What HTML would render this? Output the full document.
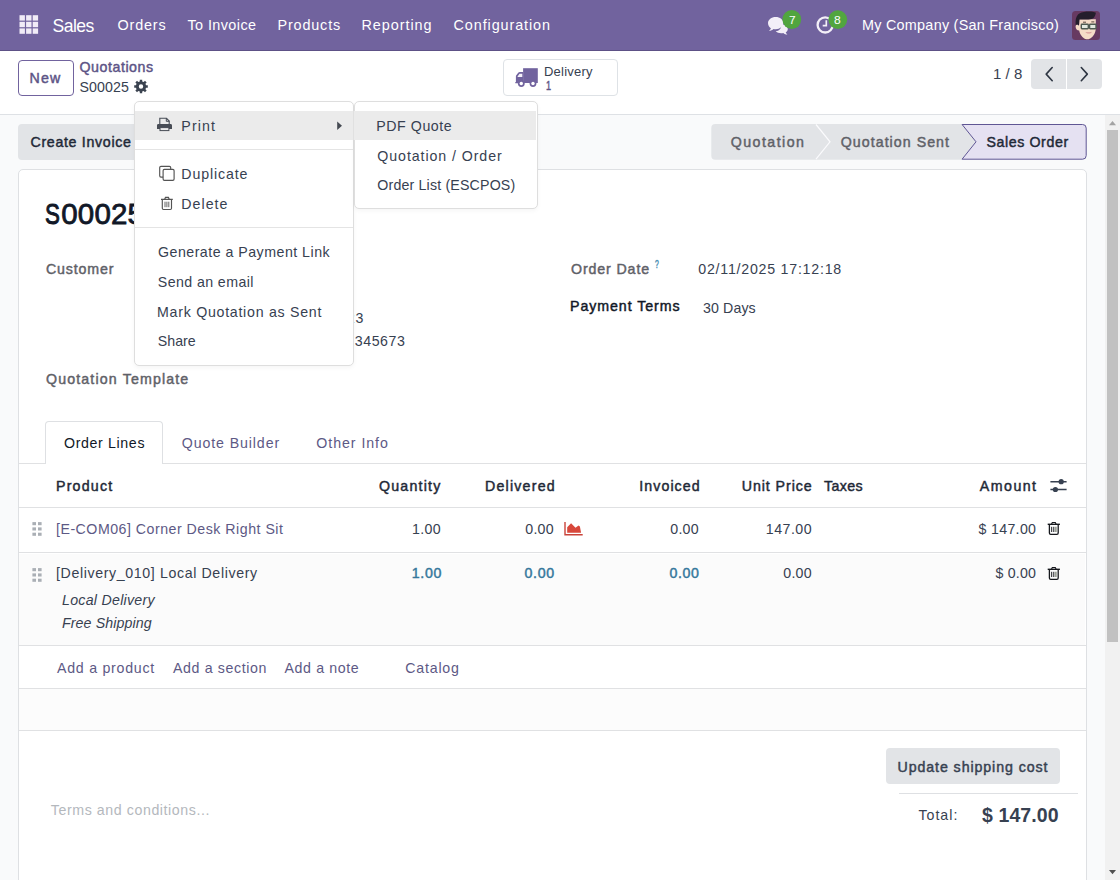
<!DOCTYPE html>
<html lang="en">
<head>
<meta charset="utf-8">
<title>Odoo - S00025</title>
<style>
*{box-sizing:border-box;margin:0;padding:0}
html,body{width:1120px;height:880px;overflow:hidden}
body{font-family:"Liberation Sans",sans-serif;font-size:15px;color:#374151;background:#f9fafb;position:relative}
.a,.t,svg{position:absolute}
.t{white-space:nowrap}
svg{overflow:visible}
h1{font:inherit}
.hl{position:absolute;height:1px;background:#e0e1e3}
.dd{position:absolute;background:#fff;border:1px solid #dedede;border-radius:5px;box-shadow:0 2px 4px rgba(0,0,0,.04)}
</style>
</head>
<body>
<nav class="o_main_navbar">
<div class="a" style="left:0px;top:0px;width:1120px;height:51px;background:#71639e;border-bottom:1px solid #5d5186"></div>
<svg width="1120" height="51" style="left:0;top:0"><g fill="#f1ecf7"><rect x="19.5" y="15.2" width="5.4" height="5.4"/><rect x="26.1" y="15.2" width="5.4" height="5.4"/><rect x="32.7" y="15.2" width="5.4" height="5.4"/><rect x="19.5" y="21.8" width="5.4" height="5.4"/><rect x="26.1" y="21.8" width="5.4" height="5.4"/><rect x="32.7" y="21.8" width="5.4" height="5.4"/><rect x="19.5" y="28.4" width="5.4" height="5.4"/><rect x="26.1" y="28.4" width="5.4" height="5.4"/><rect x="32.7" y="28.4" width="5.4" height="5.4"/></g><g fill="#f3eff8"><path d="M781.5 24.2c3.6 0.2 6.3 2.3 6.3 4.9 0 1.4-0.8 2.600-2.100 3.500 0.300 0.800 0.900 1.500 1.700 2.000-1.500 0-3.000-0.500-4.100-1.500-0.700 0.100-1.400 0.200-2.100 0.200-2.300 0-4.300-0.800-5.500-2.000 3.400-0.400 6.000-2.900 5.800-7.100z" /><path d="M775.7 17c4.300 0 7.700 2.700 7.700 6.100s-3.400 6.100-7.700 6.100c-0.700 0-1.400-0.100-2.100-0.200-1.200 1.100-2.800 1.800-4.600 1.900 0.900-0.700 1.600-1.600 1.900-2.700-1.800-1.100-2.900-2.900-2.900-5.100 0-3.400 3.400-6.100 7.700-6.100z"/></g><circle cx="791.8" cy="19.5" r="9.4" fill="#51a53f"/><circle cx="825.2" cy="24.9" r="7.6" fill="none" stroke="#f3eff8" stroke-width="2.3"/><path d="M826.3 20.3v5.400h-3.600" fill="none" stroke="#f3eff8" stroke-width="1.7"/><circle cx="837.8" cy="19.6" r="9.4" fill="#51a53f"/><g><rect x="1072" y="11" width="28" height="29" rx="3.5" fill="#673a62"/><path d="M1079.2 19.200h16.600v8.500c0 2.000-0.300 4.000-1.300 6.000-1.400 2.800-4.000 5.600-7.000 5.600s-5.700-2.600-7.200-5.400c-0.600-1.100-0.900-2.200-1.100-3.300-2.000 0.100-3.500-1.700-3.600-3.900-0.100-2.000 1.600-3.100 3.600-2.300z" fill="#f6dcc8"/><path d="M1075.800 25.200c-0.600-5.200 0.200-9.800 3.600-11.800 4.500-2.600 13.400-2.400 16.200-0.900 0.800 0.500-0.800 5.000-2.800 6.000-3.600 1.800-9.600 0.500-13.300 1.000-0.200 2.000-0.400 4.000-0.600 6.300-1.200-1.400-2.500-1.600-3.100-0.600z" fill="#241e2c"/><path d="M1083.000 22.200h3.000M1091.300 21.900h3.000" stroke="#4a3a33" stroke-width="0.900" fill="none"/><rect x="1081.300" y="24.300" width="7.000" height="4.400" rx="0.700" fill="#e4e9e0" stroke="#4f5a52" stroke-width="1.400"/><rect x="1089.600" y="24.300" width="6.400" height="4.400" rx="0.700" fill="#e4e9e0" stroke="#4f5a52" stroke-width="1.400"/><path d="M1085.400 32.000c1.700 2.200 5.300 2.200 6.600-0.300-2.000 0.600-4.400 0.700-6.600 0.300z" fill="#d99a9a"/></g></svg>
<span class="t" id="n_sales" style="left:52.50px;top:14px;line-height:24px;height:24px;font-size:17.6px;color:#fff;letter-spacing:-0.553px;">Sales</span>
<span class="t" id="n_orders" style="left:117.50px;top:15px;line-height:20px;height:20px;font-size:14.4px;color:#fff;letter-spacing:0.843px;">Orders</span>
<span class="t" id="n_toinv" style="left:187.50px;top:15px;line-height:20px;height:20px;font-size:14.4px;color:#fff;letter-spacing:0.412px;">To Invoice</span>
<span class="t" id="n_prod" style="left:277.50px;top:15px;line-height:20px;height:20px;font-size:14.4px;color:#fff;letter-spacing:0.844px;">Products</span>
<span class="t" id="n_rep" style="left:361.50px;top:15px;line-height:20px;height:20px;font-size:14.4px;color:#fff;letter-spacing:0.951px;">Reporting</span>
<span class="t" id="n_conf" style="left:453.50px;top:15px;line-height:20px;height:20px;font-size:14.4px;color:#fff;letter-spacing:0.909px;">Configuration</span>
<span class="t" id="n_comp" style="left:862.00px;top:15px;line-height:20px;height:20px;font-size:14.4px;color:#fff;letter-spacing:0.258px;">My Company (San Francisco)</span>
<span class="t" id="n_b7" style="left:788.90px;top:11px;line-height:17px;height:17px;font-size:11.7px;color:#fff;display:inline-block;transform-origin:0 0;transform:scaleX(1.0167);">7</span>
<span class="t" id="n_b8" style="left:834.40px;top:11px;line-height:17px;height:17px;font-size:11.7px;color:#fff;display:inline-block;transform-origin:0 0;transform:scaleX(1.0333);">8</span>
</nav>
<header class="o_control_panel">
<div class="a" style="left:0px;top:51px;width:1120px;height:64px;background:#fff;border-bottom:1px solid #dee1e5"></div>
<div class="a" style="left:18px;top:60px;width:56px;height:36px;border:1px solid #71639e;border-radius:4px;background:#fff"></div>
<svg width="20" height="20" style="left:0;top:0"><path d="M139.79 81.44 L139.81 79.70 L142.19 79.70 L142.21 81.44 L143.72 82.07 L144.97 80.85 L146.65 82.53 L145.43 83.78 L146.06 85.29 L147.80 85.31 L147.80 87.69 L146.06 87.71 L145.43 89.22 L146.65 90.47 L144.97 92.15 L143.72 90.93 L142.21 91.56 L142.19 93.30 L139.81 93.30 L139.79 91.56 L138.28 90.93 L137.03 92.15 L135.35 90.47 L136.57 89.22 L135.94 87.71 L134.20 87.69 L134.20 85.31 L135.94 85.29 L136.57 83.78 L135.35 82.53 L137.03 80.85 L138.28 82.07Z M138.80 86.50 a2.2 2.2 0 1 0 4.4 0 a2.2 2.2 0 1 0 -4.4 0Z" fill="#3b4350" fill-rule="evenodd"/></svg>
<div class="a" style="left:502.5px;top:59px;width:115.0px;height:37px;border:1px solid #dee2e6;border-radius:4px;background:#fff"></div>
<svg width="10" height="10" style="left:0;top:0"><g fill="#71639e"><rect x="523.100" y="68.200" width="14.700" height="14.800"/><path d="M523.100 72.000h-3.200c-0.700 0-1.300 0.300-1.700 0.800l-1.900 2.500c-0.300 0.400-0.400 0.800-0.400 1.300v5.400h-0.600v1.200h8.000z"/><circle cx="521.300" cy="83.500" r="3.400"/><circle cx="533.000" cy="83.500" r="3.400"/></g><path d="M522.300 73.700h-2.200c-0.300 0-0.600 0.100-0.800 0.400l-1.700 2.300c-0.100 0.200-0.100 0.400 0 0.700h4.700z" fill="#f4f0fa"/><circle cx="521.300" cy="83.500" r="1.700" fill="#fff"/><circle cx="533.000" cy="83.500" r="1.700" fill="#fff"/></svg>
<div class="a" style="left:1031px;top:59px;width:35.200000000000045px;height:30px;background:#e2e4e7;border-radius:4px 0 0 4px"></div>
<div class="a" style="left:1067.2px;top:59px;width:34.799999999999955px;height:30px;background:#e2e4e7;border-radius:0 4px 4px 0"></div>
<svg width="10" height="10" style="left:0;top:0"><g fill="none" stroke="#2e3643" stroke-width="1.600" stroke-linecap="round" stroke-linejoin="round"><path d="M1052.200 67.500l-6.000 6.600 6.000 6.600"/><path d="M1081.300 67.500l6.000 6.600-6.000 6.600"/></g></svg>
<span class="t" id="c_new" style="left:29.50px;top:68px;line-height:20px;height:20px;font-size:14.2px;color:#5d5486;letter-spacing:1.182px;-webkit-text-stroke:0.45px #5d5486;">New</span>
<span class="t" id="c_quot" style="left:79.50px;top:57px;line-height:20px;height:20px;font-size:14.2px;color:#5d5486;letter-spacing:0.553px;-webkit-text-stroke:0.45px #5d5486;">Quotations</span>
<span class="t" id="c_s25" style="left:79.50px;top:77px;line-height:20px;height:20px;font-size:14.2px;color:#374151;letter-spacing:0.095px;">S00025</span>
<span class="t" id="c_deliv" style="left:544.00px;top:62px;line-height:19px;height:19px;font-size:13px;color:#374151;letter-spacing:0.221px;">Delivery</span>
<span class="t" id="c_deliv1" style="left:545.50px;top:76px;line-height:19px;height:19px;font-size:13px;color:#5d5486;-webkit-text-stroke:0.45px #5d5486;display:inline-block;transform-origin:0 0;transform:scaleX(0.7000);">1</span>
<span class="t" id="c_pager" style="left:993.00px;top:63px;line-height:21px;height:21px;font-size:15px;color:#374151;letter-spacing:0.039px;">1 / 8</span>
</header>
<section class="o_form_statusbar">
<div class="a" style="left:18px;top:124px;width:182px;height:36px;background:#e2e4e7;border-radius:4px"></div>
<svg width="10" height="10" style="left:0;top:0"><path d="M715.300 124H962.100L976 141.800 962.100 159.700H715.300a4 4 0 0 1-4-4V128a4 4 0 0 1 4-4z" fill="#e2e4e7"/><path d="M816 124.500L830.000 141.800 816 159.200" fill="none" stroke="#fbfbfd" stroke-width="1.200"/><path d="M962.100 124.500H1082.600a3.600 3.600 0 0 1 3.600 3.600V155.600a3.600 3.600 0 0 1-3.600 3.600H962.100L976 141.800z" fill="#e5e1f2" stroke="#5f5694" stroke-width="1"/></svg>
<span class="t" id="s_create" style="left:30.50px;top:132px;line-height:20px;height:20px;font-size:14.2px;color:#1f2937;letter-spacing:0.686px;-webkit-text-stroke:0.45px #1f2937;">Create Invoice</span>
<span class="t" id="s_q" style="left:730.80px;top:132px;line-height:20px;height:20px;font-size:14.2px;color:#5f6168;letter-spacing:1.446px;-webkit-text-stroke:0.45px #5f6168;">Quotation</span>
<span class="t" id="s_qs" style="left:840.80px;top:132px;line-height:20px;height:20px;font-size:14.2px;color:#5f6168;letter-spacing:1.038px;-webkit-text-stroke:0.45px #5f6168;">Quotation Sent</span>
<span class="t" id="s_so" style="left:986.50px;top:132px;line-height:20px;height:20px;font-size:14.2px;color:#1f2937;letter-spacing:0.593px;-webkit-text-stroke:0.45px #1f2937;">Sales Order</span>
</section>
<main class="o_form_sheet">
<div class="a" style="left:18px;top:169px;width:1069px;height:731px;background:#fff;border:1px solid #dee0e3;border-radius:5px"></div>
<div class="hl" style="left:19px;top:463px;width:1067px"></div>
<div class="a" style="left:45px;top:421px;width:118px;height:43px;background:#fff;border:1px solid #dee0e3;border-bottom:0;border-radius:4px 4px 0 0"></div>
<div class="hl" style="left:19px;top:507px;width:1067px"></div>
<div class="hl" style="left:19px;top:552px;width:1067px"></div>
<div class="a" style="left:19px;top:554px;width:1066px;height:91px;background:#fbfbfb"></div>
<div class="hl" style="left:19px;top:645px;width:1067px"></div>
<div class="hl" style="left:19px;top:688px;width:1067px"></div>
<div class="a" style="left:19px;top:689px;width:1067px;height:41px;background:#fcfcfc"></div>
<div class="hl" style="left:19px;top:730px;width:1067px"></div>
<svg width="10" height="10" style="left:0;top:0"><g fill="#aaafb5"><rect x="32.4" y="522.1" width="3.600" height="3.100"/><rect x="38.0" y="522.1" width="3.600" height="3.100"/><rect x="32.4" y="527.4" width="3.600" height="3.100"/><rect x="38.0" y="527.4" width="3.600" height="3.100"/><rect x="32.4" y="532.7" width="3.600" height="3.100"/><rect x="38.0" y="532.7" width="3.600" height="3.100"/><rect x="32.4" y="568.1" width="3.600" height="3.100"/><rect x="38.0" y="568.1" width="3.600" height="3.100"/><rect x="32.4" y="573.4" width="3.600" height="3.100"/><rect x="38.0" y="573.4" width="3.600" height="3.100"/><rect x="32.4" y="578.7" width="3.600" height="3.100"/><rect x="38.0" y="578.7" width="3.600" height="3.100"/></g></svg>
<svg width="10" height="10" style="left:0;top:0"><path d="M565.000 522v12.800h17.700" fill="none" stroke="#c9443a" stroke-width="1.400"/><path d="M567.200 532.700v-5.400l3.900-4.100 4.400 4.600 3.000-2.200 1.400 0.800 1.200 6.300z" fill="#d8483b"/></svg>
<svg width="10" height="10" style="left:0;top:0"><g stroke="#374151" stroke-width="1.500" fill="none"><path d="M1050.400 481.700h16.200M1050.400 489.500h16.200"/></g><circle cx="1061.200" cy="481.700" r="2.600" fill="#374151"/><circle cx="1055.400" cy="489.500" r="2.600" fill="#374151"/></svg>
<svg width="10" height="10" style="left:0;top:0"><g transform="translate(1047.700 522.2)" fill="none" stroke="#16181d" stroke-width="1.300"><path d="M0.000 2.100h12.200" stroke-width="1.400"/><path d="M3.800 2.000l0.800-1.700h3.000l0.800 1.700" stroke-width="1.100"/><path d="M1.700 2.300v8.500c0 0.800 0.500 1.300 1.300 1.300h6.200c0.800 0 1.300-0.500 1.300-1.300v-8.500"/><path d="M4.000 4.600v5.200M6.100 4.600v5.200" stroke-width="1.000"/><path d="M8.200 4.600v5.200" stroke="#7d8577" stroke-width="1.300"/></g><g transform="translate(1047.700 567.2)" fill="none" stroke="#16181d" stroke-width="1.300"><path d="M0.000 2.100h12.200" stroke-width="1.400"/><path d="M3.800 2.000l0.800-1.700h3.000l0.800 1.700" stroke-width="1.100"/><path d="M1.700 2.300v8.500c0 0.800 0.500 1.300 1.300 1.300h6.200c0.800 0 1.300-0.500 1.300-1.300v-8.500"/><path d="M4.000 4.600v5.200M6.100 4.600v5.200" stroke-width="1.000"/><path d="M8.200 4.600v5.200" stroke="#7d8577" stroke-width="1.300"/></g></svg>
<div class="a" style="left:886px;top:748px;width:174px;height:36px;background:#e2e4e7;border-radius:4px"></div>
<div class="hl" style="left:899px;top:793px;width:179px;background:#dee0e3"></div>
<h1><span class="t" id="f_titleS" style="left:45.34px;top:195px;line-height:37px;height:37px;font-size:29.5px;color:#111827;-webkit-text-stroke:1.0px #111827;display:inline-block;transform-origin:0 0;transform:scaleX(0.7556);">S</span><span class="t" id="f_title" style="left:61.30px;top:195px;line-height:37px;height:37px;font-size:29.5px;color:#111827;letter-spacing:0.144px;-webkit-text-stroke:0.8px #111827;">00025</span></h1>
<span class="t" id="f_cust" style="left:46.00px;top:259px;line-height:20px;height:20px;font-size:14.2px;color:#5f6168;letter-spacing:0.854px;-webkit-text-stroke:0.45px #5f6168;">Customer</span>
<span class="t" id="f_od" style="left:571.00px;top:259px;line-height:20px;height:20px;font-size:14.2px;color:#5f6168;letter-spacing:0.879px;-webkit-text-stroke:0.45px #5f6168;">Order Date</span>
<span class="t" id="f_odq" style="left:655.20px;top:257px;line-height:15px;height:15px;font-size:10.2px;color:#4a8fb3;-webkit-text-stroke:0.45px #4a8fb3;display:inline-block;transform-origin:0 0;transform:scaleX(0.6667);">?</span>
<span class="t" id="f_odv" style="left:698.30px;top:259px;line-height:20px;height:20px;font-size:14.2px;color:#374151;letter-spacing:0.765px;">02/11/2025 17:12:18</span>
<span class="t" id="f_pt" style="left:570.00px;top:296px;line-height:20px;height:20px;font-size:14.2px;color:#111827;letter-spacing:0.937px;-webkit-text-stroke:0.45px #111827;">Payment Terms</span>
<span class="t" id="f_ptv" style="left:703.00px;top:298px;line-height:20px;height:20px;font-size:14.2px;color:#374151;letter-spacing:0.108px;">30 Days</span>
<span class="t" id="f_a1" style="left:338.00px;top:308px;line-height:20px;height:20px;font-size:14.2px;color:#374151;letter-spacing:0.910px;">123</span>
<span class="t" id="f_a2" style="left:321.00px;top:331px;line-height:20px;height:20px;font-size:14.2px;color:#374151;letter-spacing:0.554px;">9412345673</span>
<span class="t" id="f_qt" style="left:46.00px;top:369px;line-height:20px;height:20px;font-size:14.2px;color:#5f6168;letter-spacing:1.145px;-webkit-text-stroke:0.45px #5f6168;">Quotation Template</span>
<span class="t" id="tab1" style="left:64.00px;top:433px;line-height:20px;height:20px;font-size:14.2px;color:#111827;letter-spacing:0.637px;">Order Lines</span>
<span class="t" id="tab2" style="left:181.80px;top:433px;line-height:20px;height:20px;font-size:14.2px;color:#5d5985;letter-spacing:0.881px;">Quote Builder</span>
<span class="t" id="tab3" style="left:316.30px;top:433px;line-height:20px;height:20px;font-size:14.2px;color:#5d5985;letter-spacing:0.945px;">Other Info</span>
<span class="t" id="h_prod" style="left:56.00px;top:476px;line-height:20px;height:20px;font-size:14.2px;color:#1f2937;letter-spacing:1.216px;-webkit-text-stroke:0.45px #1f2937;">Product</span>
<span class="t" id="h_qty" style="left:379.00px;top:476px;line-height:20px;height:20px;font-size:14.2px;color:#1f2937;letter-spacing:1.215px;-webkit-text-stroke:0.45px #1f2937;">Quantity</span>
<span class="t" id="h_del" style="left:485.00px;top:476px;line-height:20px;height:20px;font-size:14.2px;color:#1f2937;letter-spacing:1.214px;-webkit-text-stroke:0.45px #1f2937;">Delivered</span>
<span class="t" id="h_inv" style="left:639.30px;top:476px;line-height:20px;height:20px;font-size:14.2px;color:#1f2937;letter-spacing:1.071px;-webkit-text-stroke:0.45px #1f2937;">Invoiced</span>
<span class="t" id="h_up" style="left:741.80px;top:476px;line-height:20px;height:20px;font-size:14.2px;color:#1f2937;letter-spacing:0.927px;-webkit-text-stroke:0.45px #1f2937;">Unit Price</span>
<span class="t" id="h_tax" style="left:824.00px;top:476px;line-height:20px;height:20px;font-size:14.2px;color:#1f2937;letter-spacing:0.383px;-webkit-text-stroke:0.45px #1f2937;">Taxes</span>
<span class="t" id="h_amt" style="left:979.80px;top:476px;line-height:20px;height:20px;font-size:14.2px;color:#1f2937;letter-spacing:1.470px;-webkit-text-stroke:0.45px #1f2937;">Amount</span>
<span class="t" id="r1_p" style="left:56.00px;top:519px;line-height:20px;height:20px;font-size:14.2px;color:#5d5985;letter-spacing:0.495px;">[E-COM06] Corner Desk Right Sit</span>
<span class="t" id="r1_q" style="left:412.00px;top:519px;line-height:20px;height:20px;font-size:14.2px;color:#374151;letter-spacing:0.342px;">1.00</span>
<span class="t" id="r1_d" style="left:525.30px;top:519px;line-height:20px;height:20px;font-size:14.2px;color:#374151;letter-spacing:0.242px;">0.00</span>
<span class="t" id="r1_i" style="left:670.30px;top:519px;line-height:20px;height:20px;font-size:14.2px;color:#374151;letter-spacing:0.242px;">0.00</span>
<span class="t" id="r1_u" style="left:765.80px;top:519px;line-height:20px;height:20px;font-size:14.2px;color:#374151;letter-spacing:0.489px;">147.00</span>
<span class="t" id="r1_a" style="left:978.50px;top:519px;line-height:20px;height:20px;font-size:14.2px;color:#374151;letter-spacing:0.323px;">$ 147.00</span>
<span class="t" id="r2_p" style="left:56.00px;top:563px;line-height:20px;height:20px;font-size:14.2px;color:#374151;letter-spacing:0.620px;">[Delivery_010] Local Delivery</span>
<span class="t" id="r2_q" style="left:411.80px;top:563px;line-height:20px;height:20px;font-size:14.2px;color:#35789c;letter-spacing:0.626px;-webkit-text-stroke:0.45px #35789c;">1.00</span>
<span class="t" id="r2_d" style="left:524.50px;top:563px;line-height:20px;height:20px;font-size:14.2px;color:#35789c;letter-spacing:0.692px;-webkit-text-stroke:0.45px #35789c;">0.00</span>
<span class="t" id="r2_i" style="left:669.50px;top:563px;line-height:20px;height:20px;font-size:14.2px;color:#35789c;letter-spacing:0.626px;-webkit-text-stroke:0.45px #35789c;">0.00</span>
<span class="t" id="r2_u" style="left:783.30px;top:563px;line-height:20px;height:20px;font-size:14.2px;color:#374151;letter-spacing:0.242px;">0.00</span>
<span class="t" id="r2_a" style="left:995.50px;top:563px;line-height:20px;height:20px;font-size:14.2px;color:#374151;letter-spacing:0.209px;">$ 0.00</span>
<span class="t" id="r2_l1" style="left:62.00px;top:590px;line-height:20px;height:20px;font-size:14.2px;color:#374151;letter-spacing:0.269px;font-style:italic;">Local Delivery</span>
<span class="t" id="r2_l2" style="left:62.00px;top:613px;line-height:20px;height:20px;font-size:14.2px;color:#374151;letter-spacing:0.109px;font-style:italic;">Free Shipping</span>
<span class="t" id="a_1" style="left:57.00px;top:658px;line-height:20px;height:20px;font-size:14.2px;color:#5d5985;letter-spacing:0.738px;">Add a product</span>
<span class="t" id="a_2" style="left:173.00px;top:658px;line-height:20px;height:20px;font-size:14.2px;color:#5d5985;letter-spacing:0.618px;">Add a section</span>
<span class="t" id="a_3" style="left:284.50px;top:658px;line-height:20px;height:20px;font-size:14.2px;color:#5d5985;letter-spacing:0.612px;">Add a note</span>
<span class="t" id="a_4" style="left:405.30px;top:658px;line-height:20px;height:20px;font-size:14.2px;color:#5d5985;letter-spacing:0.782px;">Catalog</span>
<span class="t" id="t_terms" style="left:50.80px;top:800px;line-height:20px;height:20px;font-size:14.2px;color:#b4b8bd;letter-spacing:0.580px;">Terms and conditions...</span>
<span class="t" id="t_upd" style="left:897.50px;top:757px;line-height:20px;height:20px;font-size:14.2px;color:#374151;letter-spacing:0.918px;-webkit-text-stroke:0.45px #374151;">Update shipping cost</span>
<span class="t" id="t_total" style="left:918.40px;top:805px;line-height:20px;height:20px;font-size:14.2px;color:#374151;letter-spacing:1.007px;">Total:</span>
<span class="t" id="t_amt" style="left:982.00px;top:802px;line-height:26px;height:26px;font-size:19.5px;color:#374151;letter-spacing:0.099px;font-weight:bold;">$ 147.00</span>
</main>
<div class="scrollbar">
<div class="a" style="left:1105px;top:115px;width:15px;height:765px;background:#f1f1f1"></div>
<div class="a" style="left:1107px;top:130px;width:11px;height:512px;background:#c1c1c1"></div>
<svg width="10" height="10" style="left:0;top:0"><path d="M1109 125.200l3.500-4.200 3.500 4.200z" fill="#a3a3a3"/><path d="M1109 870l3.500 4.200 3.500-4.200z" fill="#505050"/></svg>
</div>
<div class="o-dropdown--menu" role="menu">
<div class="dd" style="left:133.5px;top:101px;width:220px;height:264.500px"></div>
<div class="dd" style="left:353.500px;top:101px;width:184px;height:107.500px"></div>
<div class="a" style="left:134.5px;top:111.3px;width:218.7px;height:28.299999999999997px;background:#ebebeb"></div>
<div class="a" style="left:353.2px;top:111.3px;width:183.3px;height:28.299999999999997px;background:#ebebeb"></div>
<div class="a" style="left:353px;top:111.3px;width:1px;height:28.299999999999997px;background:#e0e0e0"></div>
<div class="hl" style="left:134.500px;top:149px;width:218px;background:#e4e4e4"></div>
<div class="hl" style="left:134.500px;top:227px;width:218px;background:#e4e4e4"></div>
<svg width="10" height="10" style="left:0;top:0"><path d="M159.800 124.600v-6.300h6.700l2.700 2.700v3.600" fill="#ebebeb" stroke="#474c55" stroke-width="1.100"/><path d="M166.300 118.300v3.000h3.000" fill="none" stroke="#474c55" stroke-width="1.000"/><path d="M158.400 124.100h12.200c0.800 0 1.400 0.600 1.400 1.400v3.500h-15.000v-3.500c0-0.800 0.600-1.400 1.400-1.400z" fill="#474c55"/><rect x="160.000" y="127.600" width="8.900" height="3.000" fill="#ebebeb" stroke="#474c55" stroke-width="1.000"/><path d="M337.200 121.400l4.800 4.300-4.800 4.300z" fill="#454a52"/><rect x="159.700" y="166.300" width="11.000" height="10.800" rx="1.300" fill="#fff" stroke="#545454" stroke-width="1.150"/><rect x="163.100" y="169.400" width="11.000" height="11.000" rx="1.300" fill="#fff" stroke="#545454" stroke-width="1.150"/><g fill="none" stroke="#545454" stroke-width="1.150"><path d="M161.000 199.400h11.800M164.600 199.300l0.900-1.900h2.900l0.900 1.900"/><path d="M162.300 199.600v8.700c0 0.700 0.500 1.200 1.200 1.200h6.800c0.700 0 1.200-0.500 1.200-1.200v-8.700"/><path d="M165.000 201.700v5.500M166.900 201.700v5.500M168.800 201.700v5.500" stroke-width="0.900"/></g></svg>
<span class="t" id="d_print" style="left:181.30px;top:116px;line-height:20px;height:20px;font-size:14.2px;color:#374151;letter-spacing:1.118px;">Print</span>
<span class="t" id="d_dup" style="left:181.30px;top:164px;line-height:20px;height:20px;font-size:14.2px;color:#374151;letter-spacing:0.868px;">Duplicate</span>
<span class="t" id="d_del" style="left:181.30px;top:194px;line-height:20px;height:20px;font-size:14.2px;color:#374151;letter-spacing:1.016px;">Delete</span>
<span class="t" id="d_gen" style="left:158.00px;top:242px;line-height:20px;height:20px;font-size:14.2px;color:#374151;letter-spacing:0.487px;">Generate a Payment Link</span>
<span class="t" id="d_send" style="left:157.80px;top:272px;line-height:20px;height:20px;font-size:14.2px;color:#374151;letter-spacing:0.408px;">Send an email</span>
<span class="t" id="d_mark" style="left:157.00px;top:302px;line-height:20px;height:20px;font-size:14.2px;color:#374151;letter-spacing:0.733px;">Mark Quotation as Sent</span>
<span class="t" id="d_share" style="left:157.80px;top:331px;line-height:20px;height:20px;font-size:14.2px;color:#374151;letter-spacing:-0.005px;">Share</span>
<span class="t" id="d_pdf" style="left:376.30px;top:116px;line-height:20px;height:20px;font-size:14.2px;color:#374151;letter-spacing:0.547px;">PDF Quote</span>
<span class="t" id="d_qo" style="left:377.30px;top:146px;line-height:20px;height:20px;font-size:14.2px;color:#374151;letter-spacing:0.926px;">Quotation / Order</span>
<span class="t" id="d_ol" style="left:377.30px;top:175px;line-height:20px;height:20px;font-size:14.2px;color:#374151;letter-spacing:0.173px;">Order List (ESCPOS)</span>
</div>
</body>
</html>
